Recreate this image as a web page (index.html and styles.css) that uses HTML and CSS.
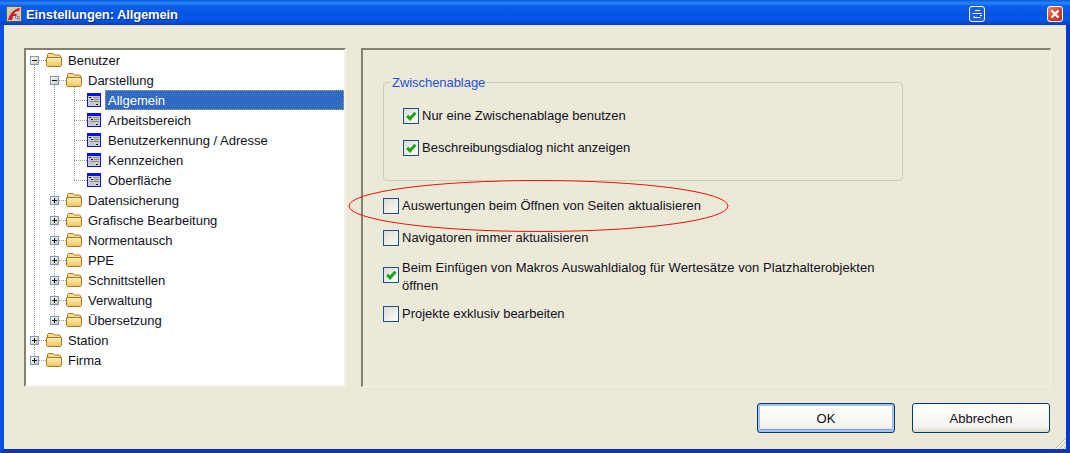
FILE: index.html
```html
<!DOCTYPE html>
<html lang="de">
<head>
<meta charset="utf-8">
<title>Einstellungen: Allgemein</title>
<link rel="stylesheet" href="styles.css">
</head>
<body>
<svg class="defs" width="0" height="0" aria-hidden="true">
  <defs>
    <linearGradient id="folderfill" x1="0" y1="0" x2="0" y2="1">
      <stop offset="0" stop-color="#fdf0b8"/>
      <stop offset="1" stop-color="#f0c45e"/>
    </linearGradient>
  </defs>
  <symbol id="folder" viewBox="0 0 16 14">
    <path d="M1.500 3V1.500L2.500.5H7L8.500 2H13.500L14.500 3V4.500H1.500Z" fill="#f5dc90" stroke="#ac7a22"/>
    <path d="M.5 4.500H15.500V12.500L14.500 13.500H1.500L.5 12.500Z" fill="url(#folderfill)" stroke="#ac7a22"/>
  </symbol>
  <symbol id="leaf" viewBox="0 0 14 14">
    <rect x=".5" y=".5" width="13" height="13" fill="#cccccc" stroke="#0a12ee"/>
    <rect x="1" y="1" width="12" height="2" fill="#0a12ee"/>
    <path d="M2 4.500H4M4 6.500H6M9 11.500H11" stroke="#111" fill="none"/>
    <path d="M6 4.500H12M7 6.500H12M3 8.500H12" stroke="#8a8a8a" fill="none"/>
  </symbol>
  <symbol id="tick" viewBox="0 0 16 16">
    <path d="M4.200 7.800 7 10.800 12.400 4.800" stroke="#21a121" stroke-width="3" fill="none"/>
  </symbol>
</svg>
<div class="window">
  <header class="titlebar">
    <svg class="appicon" viewBox="0 0 16 16" width="16" height="16">
      <rect width="16" height="16" fill="#5c5c5c"/>
      <rect x="1" y="1" width="14" height="14" fill="#cfcac0"/>
      <path d="M2 14C4 8 7 3 14 2L13 5C10 5 9 6 8 8H11L10 10H7L6 14Z" fill="#c8201c"/>
      <path d="M9 11 14 14M11 10 14 12" stroke="#2a2a2a" stroke-dasharray="1 1" fill="none"/>
    </svg>
    <span class="titletext">Einstellungen: Allgemein</span>
    <span class="tbtn tbtn-roll">
      <svg viewBox="0 0 16 16" width="16" height="16">
        <path d="M6 4.500H11M3.500 7.500H12.500M4.500 11.500H11.500M5 10V11M11 9.500H13" stroke="#fff" fill="none"/>
      </svg>
    </span>
    <span class="tbtn tbtn-close">
      <svg viewBox="0 0 16 16" width="16" height="16">
        <path d="M4.500 4.500 11.500 11.500M11.500 4.500 4.500 11.500" stroke="#fff" stroke-width="2.400" fill="none"/>
      </svg>
    </span>
  </header>
  <div class="client">
    <main class="panels">
      <nav class="tree">
        <i class="guide guide-0"></i><i class="guide guide-1"></i><i class="guide guide-2"></i>
        <div class="row l0"><span class="exp"></span><i class="conn"></i><svg class="folder"><use href="#folder"/></svg><span class="label">Benutzer</span></div>
        <div class="row l1"><span class="exp"></span><i class="conn"></i><svg class="folder"><use href="#folder"/></svg><span class="label">Darstellung</span></div>
        <div class="row l2"><i class="conn conn-leaf"></i><svg class="leaf"><use href="#leaf"/></svg><span class="label label-leaf selected">Allgemein</span></div>
        <div class="row l2"><i class="conn conn-leaf"></i><svg class="leaf"><use href="#leaf"/></svg><span class="label label-leaf">Arbeitsbereich</span></div>
        <div class="row l2"><i class="conn conn-leaf"></i><svg class="leaf"><use href="#leaf"/></svg><span class="label label-leaf">Benutzerkennung / Adresse</span></div>
        <div class="row l2"><i class="conn conn-leaf"></i><svg class="leaf"><use href="#leaf"/></svg><span class="label label-leaf">Kennzeichen</span></div>
        <div class="row l2"><i class="conn conn-leaf"></i><svg class="leaf"><use href="#leaf"/></svg><span class="label label-leaf">Oberfläche</span></div>
        <div class="row l1"><span class="exp exp-plus"></span><i class="conn"></i><svg class="folder"><use href="#folder"/></svg><span class="label">Datensicherung</span></div>
        <div class="row l1"><span class="exp exp-plus"></span><i class="conn"></i><svg class="folder"><use href="#folder"/></svg><span class="label">Grafische Bearbeitung</span></div>
        <div class="row l1"><span class="exp exp-plus"></span><i class="conn"></i><svg class="folder"><use href="#folder"/></svg><span class="label">Normentausch</span></div>
        <div class="row l1"><span class="exp exp-plus"></span><i class="conn"></i><svg class="folder"><use href="#folder"/></svg><span class="label">PPE</span></div>
        <div class="row l1"><span class="exp exp-plus"></span><i class="conn"></i><svg class="folder"><use href="#folder"/></svg><span class="label">Schnittstellen</span></div>
        <div class="row l1"><span class="exp exp-plus"></span><i class="conn"></i><svg class="folder"><use href="#folder"/></svg><span class="label">Verwaltung</span></div>
        <div class="row l1"><span class="exp exp-plus"></span><i class="conn"></i><svg class="folder"><use href="#folder"/></svg><span class="label">Übersetzung</span></div>
        <div class="row l0"><span class="exp exp-plus"></span><i class="conn"></i><svg class="folder"><use href="#folder"/></svg><span class="label">Station</span></div>
        <div class="row l0"><span class="exp exp-plus"></span><i class="conn"></i><svg class="folder"><use href="#folder"/></svg><span class="label">Firma</span></div>
      </nav>
      <section class="settings">
        <fieldset class="group">
          <legend class="group-title">Zwischenablage</legend>
          <div class="check check-g1"><span class="box"><svg class="tick"><use href="#tick"/></svg></span><span>Nur eine Zwischenablage benutzen</span></div>
          <div class="check check-g2"><span class="box"><svg class="tick"><use href="#tick"/></svg></span><span>Beschreibungsdialog nicht anzeigen</span></div>
        </fieldset>
        <div class="check check-a"><span class="box"></span><span>Auswertungen beim Öffnen von Seiten aktualisieren</span></div>
        <div class="check check-b"><span class="box"></span><span>Navigatoren immer aktualisieren</span></div>
        <div class="check check-c"><span class="box box-c"><svg class="tick"><use href="#tick"/></svg></span><span class="wrap">Beim Einfügen von Makros Auswahldialog für Wertesätze von Platzhalterobjekten öffnen</span></div>
        <div class="check check-d"><span class="box"></span><span>Projekte exklusiv bearbeiten</span></div>
        <svg class="ellipse" width="384" height="54" viewBox="0 0 384 54">
          <ellipse cx="191.500" cy="27" rx="189.500" ry="25.500" fill="none" stroke="#f01010"/>
        </svg>
      </section>
    </main>
    <footer class="footer">
      <button class="btn btn-default" type="button">OK</button>
      <button class="btn" type="button">Abbrechen</button>
      <svg class="grip" width="12" height="12" viewBox="0 0 12 12">
        <path d="M11.500 1.500 1.500 11.500M11.500 5.500 5.500 11.500M11.500 9.500 9.500 11.500" stroke="#b5b2a0" fill="none"/>
        <path d="M11.500 3 3 11.500M11.500 7 7 11.500" stroke="#fff" fill="none"/>
      </svg>
    </footer>
  </div>
</div>
</body>
</html>
```

FILE: styles.css
```css
* { box-sizing: border-box; }
html, body { margin: 0; padding: 0; }
body { font-family: "Liberation Sans", Arial, sans-serif; font-size: 13px; color: #10101c; background: #ece9d8; overflow: hidden; }
.defs { position: absolute; }
.window { width: 1070px; height: 453px; display: flex; flex-direction: column; background: #0a50e4; }
.titlebar {
  height: 25px; flex: none; display: flex; align-items: center; padding: 3px 7px 0 6px;
  background: linear-gradient(to bottom, #0858de 0, #2a86f6 3px, #0a60ec 6px, #0554e4 14px, #0558ea 20px, #0448d2 23px, #0340c0 25px);
}
.appicon { flex: none; margin-right: 4px; }
.titletext { flex: 1; color: #fff; font-weight: bold; font-size: 13px; letter-spacing: -0.12px; text-shadow: 1px 1px 1px #0a2a80; }
.tbtn { width: 16px; height: 16px; border: 1px solid #fff; border-radius: 3px; display: flex; align-items: center; justify-content: center; }
.tbtn svg { flex: none; margin: -1px; }
.tbtn-roll { background: #1a5ee8; margin-right: 62px; }
.tbtn-close { background: linear-gradient(135deg, #e88a70, #d8442a 50%, #b83018); }
.client {
  flex: 1; display: flex; flex-direction: column; background: #ece9d8;
  border-left: 4px solid #0a50e4; border-right: 4px solid #0838c8; border-bottom: 4px solid #0838b8;
}
.panels { display: flex; gap: 15px; padding: 23px 15px 0 20px; }
.tree {
  position: relative; width: 322px; height: 339px; flex: none; background: #fff;
  border: 2px solid; border-color: #83816f #f4f2e8 #f4f2e8 #83816f;
}
.guide { position: absolute; width: 0; border-left: 1px dotted #a09e90; }
.guide-0 { left: 8px; top: 15px; height: 295px; }
.guide-1 { left: 28px; top: 35px; height: 235px; }
.guide-2 { left: 48px; top: 35px; height: 95px; }
.row { position: relative; height: 20px; display: flex; align-items: center; }
.l0 { padding-left: 4px; }
.l1 { padding-left: 24px; }
.l2 { padding-left: 48px; }
.exp {
  position: relative; width: 9px; height: 9px; flex: none;
  border: 1px solid #7a99b8; background: linear-gradient(135deg, #fff, #c8c4b8);
}
.exp::before { content: ""; position: absolute; left: 1px; top: 3px; width: 5px; height: 1px; background: #111; }
.exp-plus::after { content: ""; position: absolute; left: 3px; top: 1px; width: 1px; height: 5px; background: #111; }
.conn { width: 7px; flex: none; border-top: 1px dotted #a09e90; }
.conn-leaf { width: 13px; }
.folder { width: 16px; height: 14px; flex: none; margin-top: -1px; }
.leaf { width: 14px; height: 14px; flex: none; }
.label { margin-left: 6px; white-space: nowrap; }
.label-leaf { margin-left: 4px; padding: 1px 0 0 3px; flex: 1; height: 20px; line-height: 19px; }
.selected { background: #316ac5; color: #fff; outline: 1px dotted #b9a860; outline-offset: -1px; }
.settings {
  position: relative; width: 690px; height: 339px; flex: none;
  border: 2px solid; border-color: #83816f #f4f2e8 #f4f2e8 #83816f; border-right-width: 1px; border-bottom-width: 1px;
  padding: 25px 0 0 20px;
}
.group {
  width: 520px; height: 106px; margin: 0; padding: 0 0 0 19px; min-width: 0;
  border: 1px solid #cfccba; border-radius: 4px; display: flow-root;
}
.group-title { color: #2450e0; padding: 0 1px; margin-left: -12px; height: 15px; line-height: 15px; letter-spacing: -0.05px; }
.check { display: flex; align-items: center; gap: 3px; line-height: 18px; }
.box {
  width: 16px; height: 16px; flex: none; border: 1px solid #1c5180;
  background: linear-gradient(135deg, #dcdcd5, #fbfbf8);
}
.box-c { margin-bottom: 4px; }
.tick { width: 16px; height: 16px; display: block; margin: -1px; }
.wrap { width: 490px; letter-spacing: 0.05px; }
.check-g1 { margin-top: 18px; height: 16px; }
.check-g2 { margin-top: 16px; height: 16px; }
.check-a { margin-top: 17px; height: 16px; }
.check-b { margin-top: 16px; height: 16px; }
.check-c { margin-top: 13px; height: 36px; }
.check-d { margin-top: 11px; height: 16px; }
.ellipse { position: absolute; left: -16px; top: 129px; }
.footer { position: relative; flex: 1; display: flex; justify-content: flex-end; align-items: flex-start; gap: 17px; padding: 16px 16px 0 0; }
.btn {
  width: 138px; height: 30px; border: 1px solid #003c74; border-radius: 3px; padding: 0;
  background: linear-gradient(to bottom, #fff, #f4f3ee 80%, #dcd8ca);
  font: 13px "Liberation Sans", Arial, sans-serif; color: #10101c;
}
.btn-default { box-shadow: inset 0 0 0 2px #a8c0ec, inset 0 -1px 0 2px #7ea0dc; }
.grip { position: absolute; right: 0; bottom: 0; }
```
